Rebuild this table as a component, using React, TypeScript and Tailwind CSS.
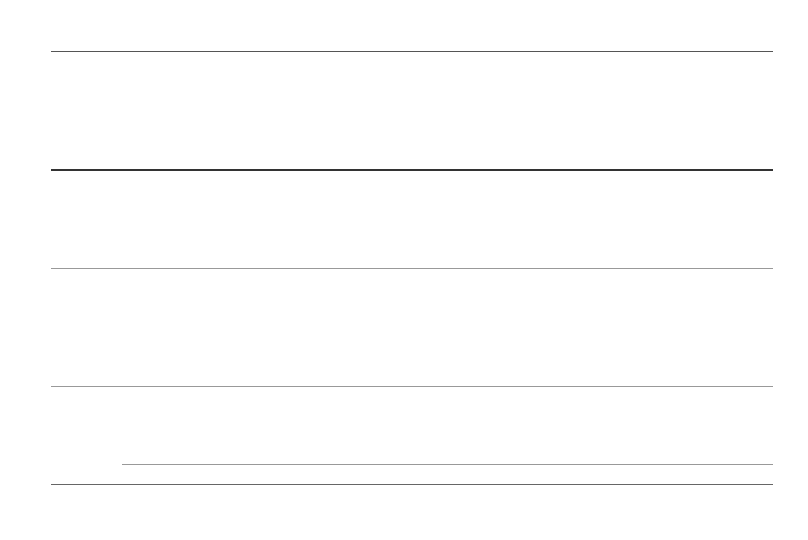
import React from "react";

export default function App() {
  return (
    <div className="w-[808px] h-[540px] bg-white" style={{ fontFamily: '"Liberation Sans", Arial, sans-serif' }}>
      <div className="pt-[51px] pl-[51px]">
        <div className="w-[722px] flex flex-col">
          <div className="h-px bg-[#555555]" />
          <div className="h-[117px]" />
          <div className="h-[2px] bg-[#333333]" />
          <div className="h-[97px]" />
          <div className="h-px bg-[#999999]" />
          <div className="h-[117px]" />
          <div className="h-px bg-[#999999]" />
          <div className="h-[77px]" />
          <div className="flex">
            <div className="w-[71px]" />
            <div className="flex-1 h-px bg-[#999999]" />
          </div>
          <div className="h-[19px]" />
          <div className="h-px bg-[#666666]" />
        </div>
      </div>
    </div>
  );
}
